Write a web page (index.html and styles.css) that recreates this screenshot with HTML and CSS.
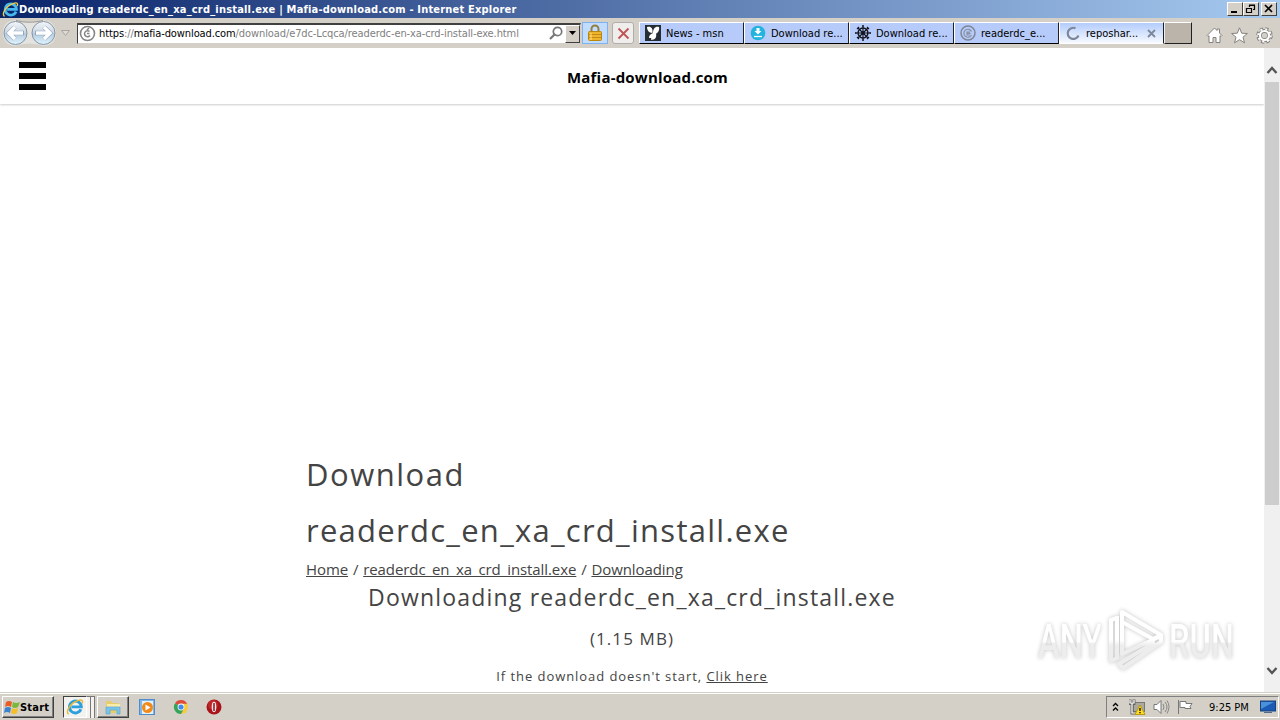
FILE: index.html
```html
<!DOCTYPE html>
<html>

	<head>
		<meta charset="UTF-8">
		<title>Downloading readerdc_en_xa_crd_install.exe | Mafia-download.com</title>
		<link rel="stylesheet" href="styles.css">
	</head>

	<body>
		<div class="titlebar">
			<svg class="ie" width="17" height="17" viewBox="0 0 20 20"><path d="M16.500 12.500A6.600 6.600 0 1 1 17 9.800H6" fill="none" stroke="#45b9ee" stroke-width="3.200"/><path d="M3 18C-1 16 4 6 13 3c5-2 6 0 5 3" fill="none" stroke="#f3cf45" stroke-width="1.600"/></svg>
			<span class="title">Downloading readerdc_en_xa_crd_install.exe | Mafia-download.com - Internet Explorer</span>
			<div class="winbtns">
				<span class="wbtn"><svg width="14" height="12"><path d="M3 9h6" stroke="#000" stroke-width="2"/></svg></span>
				<span class="wbtn"><svg width="14" height="12"><path d="M5.500 4V2.500h5v4H9M5 2h6M2.500 5.500h5v4h-5zM2 5.500h6" fill="none" stroke="#000" stroke-width="1.200"/></svg></span>
				<span class="wbtn last"><svg width="14" height="12"><path d="M3 2l7 7M10 2l-7 7" stroke="#000" stroke-width="1.700"/></svg></span>
			</div>
		</div>
		<div class="toolbar">
			<svg class="nav" width="74" height="28" viewBox="0 0 74 28">
				<defs>
					<linearGradient id="ball" x1="0" y1="0" x2="0" y2="1"><stop offset="0" stop-color="#f4f6fa"/><stop offset=".48" stop-color="#ccd7e4"/><stop offset=".52" stop-color="#b5c9dd"/><stop offset="1" stop-color="#dff6ff"/></linearGradient>
				</defs>
				<path d="M15 1Q29 5 43 1Q56 2 56 15Q55 27 43 27Q29 22 15 27Q3 26 3 14Q3 2 15 1z" fill="#e5e3df"/>
				<path d="M16 1.500Q29 5 43 1.500" fill="none" stroke="#9b9895"/>
				<circle cx="15.500" cy="14" r="11.500" fill="url(#ball)" stroke="#8796a5"/>
				<circle cx="43.500" cy="14" r="11.500" fill="url(#ball)" stroke="#8796a5"/>
				<path d="M24 14H9M15 8l-6 6 6 6" fill="none" stroke="#8fa6bd" stroke-width="4.500"/>
				<path d="M35 14h15M44 8l6 6-6 6" fill="none" stroke="#8fa6bd" stroke-width="4.500"/>
				<path d="M23 14H9M15 8l-6 6 6 6" fill="none" stroke="#fff" stroke-width="3.400"/>
				<path d="M36 14h14M44 8l6 6-6 6" fill="none" stroke="#fff" stroke-width="3.400"/>
				<path d="M61.500 11.500h8l-4 5z" fill="#dedbd6" stroke="#aaa59e"/>
			</svg>
			<div class="address">
				<svg class="swirl" width="17" height="17" viewBox="0 0 17 17"><circle cx="8.500" cy="8.500" r="7" fill="none" stroke="#858585" stroke-width="1.600"/><path d="M11 10.500A3 3 0 1 1 10.500 6.500M8 8.500h2.500M8 5l2-2" fill="none" stroke="#858585" stroke-width="1.500"/></svg>
				<span class="url">https<i>://</i>mafia-download.com<i class="path">/download/e7dc-Lcqca/readerdc-en-xa-crd-install-exe.html</i></span>
				<svg class="search" width="14" height="15" viewBox="0 0 14 15"><circle cx="8.500" cy="5.500" r="4.200" fill="none" stroke="#777" stroke-width="1.700"/><path d="M5.500 8.500L1 13" stroke="#777" stroke-width="2.200"/></svg>
				<span class="drop"><svg width="8" height="5"><path d="M0 0h7L3.500 4z"/></svg></span>
			</div>
			<div class="lock">
				<svg width="16" height="18" viewBox="0 0 16 18"><path d="M4.500 8V5a3.500 3.500 0 0 1 7 0v3" fill="none" stroke="#94803e" stroke-width="2"/><rect x="1.500" y="7.500" width="13" height="9" rx="1" fill="#edb42c" stroke="#b98614"/><path d="M2 10.500h12M2 13.500h12" stroke="#c38b15"/><path d="M4 9v7" stroke="#ffe28a"/></svg>
			</div>
			<div class="stop">
				<svg width="13" height="13" viewBox="0 0 13 13"><path d="M1.500 1.500l10 10M11.500 1.500l-10 10" stroke="#bf5557" stroke-width="1.900"/></svg>
			</div>
			<div class="tabs">
				<div class="tab">
					<svg width="16" height="16" viewBox="0 0 16 16"><rect width="16" height="16" fill="#252c34"/><path d="M2 2c4-1 6 1 5.500 6C4 8 2 5 2 2zM8 8c0-4 2-7 6-6 1 4-2 6-3 7 1 3-1 6-5 6 1-2 0-2-2-2 0-3 2-4 4-5z" fill="#fff"/></svg>
					<span class="label">News - msn</span>
				</div>
				<div class="tab">
					<svg width="16" height="16" viewBox="0 0 16 16"><circle cx="8" cy="8" r="7.300" fill="#22b4de"/><path d="M6.500 3h3v3h2L8 9.500 4.500 6h2z" fill="#fff"/><path d="M4 11.500h8" stroke="#fff" stroke-width="1.300"/></svg>
					<span class="label">Download re...</span>
				</div>
				<div class="tab">
					<svg width="16" height="16" viewBox="0 0 16 16"><circle cx="8" cy="8" r="4.900" fill="none" stroke="#10151f" stroke-width="1.500"/><path d="M8 1v14M1 8h14M3 3l10 10M13 3L3 13" stroke="#10151f" stroke-width="1.100"/><circle cx="8" cy="8" r="1.800" fill="#10151f"/><path d="M7 .8h2M7 15.200h2M.8 7v2M15.200 7v2M2 4l2-2M12 2l2 2M2 12l2 2M12 14l2-2" stroke="#10151f" stroke-width="1.200"/></svg>
					<span class="label">Download re...</span>
				</div>
				<div class="tab">
					<svg width="16" height="16" viewBox="0 0 16 16"><circle cx="8" cy="8" r="7" fill="none" stroke="#7e8798" stroke-width="1.500"/><path d="M11.500 10A4 4 0 1 1 11.500 6.500M6.500 8.300h4M10 7H7v3h3" fill="none" stroke="#8690a1" stroke-width="1.200"/></svg>
					<span class="label">readerdc_e...</span>
				</div>
				<div class="tab active">
					<svg width="16" height="16" viewBox="0 0 16 16"><path d="M13.500 10.500A5.600 5.600 0 1 1 10.500 3.200" fill="none" stroke="#7d879a" stroke-width="2.200"/></svg>
					<span class="label">reposhar...</span>
					<svg class="close" width="9" height="9"><path d="M1 1l7 7M8 1L1 8" stroke="#7c879a" stroke-width="1.800"/></svg>
				</div>
				<div class="newtab"></div>
			</div>
			<div class="tools">
				<svg width="17" height="17" viewBox="0 0 17 17"><path d="M1 8.500L8.500 1 11 3.500V2h2.500v4L16 8.500l-1 1-1-.8V15.500h-4v-5H7v5H3V8.700l-1 .8z" fill="#fff" stroke="#85827d"/></svg>
				<svg width="17" height="17" viewBox="0 0 17 17"><path d="M8.500 .8l2.200 5.400 5.700.3-4.400 3.700 1.500 5.600-5-3.100-5 3.100L5 10.200.6 6.500l5.700-.3z" fill="#fff" stroke="#85827d"/></svg>
				<svg width="17" height="17" viewBox="0 0 17 17"><circle cx="8.500" cy="8.500" r="6.500" fill="none" stroke="#85827d" stroke-width="3.500" stroke-dasharray="3 2.100"/><circle cx="8.500" cy="8.500" r="4.500" fill="none" stroke="#85827d" stroke-width="4"/><circle cx="8.500" cy="8.500" r="6.300" fill="none" stroke="#fff" stroke-width="2" stroke-dasharray="2 2.950"/><circle cx="8.500" cy="8.500" r="4.500" fill="none" stroke="#fff" stroke-width="2.200"/><circle cx="8.500" cy="8.500" r="2.500" fill="#d4d0c8"/></svg>
			</div>
		</div>

		<div class="view">
			<div class="page">
				<header class="head">
					<div class="burger"><b></b><b></b><b></b></div>
					<div class="brand">Mafia-download.com</div>
				</header>
				<main class="content">
					<h1>Download<br><span>readerdc_en_xa_crd_install.exe</span></h1>
					<div class="crumbs"><a>Home</a> / <a>readerdc_en_xa_crd_install.exe</a> / <a>Downloading</a></div>
					<h2>Downloading readerdc_en_xa_crd_install.exe</h2>
					<div class="size">(1.15 MB)</div>
					<p class="hint">If the download doesn't start, <a>Clik here</a></p>
				</main>
			</div>
			<div class="scrollbar">
				<svg class="up" width="12" height="9" viewBox="0 0 12 9"><path d="M1.500 7L6 2l4.500 5" fill="none" stroke="#555" stroke-width="2.400"/></svg>
				<div class="thumb"></div>
				<svg class="down" width="12" height="9" viewBox="0 0 12 9"><path d="M1.500 2L6 7l4.500-5" fill="none" stroke="#555" stroke-width="2.400"/></svg>
			</div>
			<!-- watermark over the page -->
			<div class="mark">
				<span class="any">ANY</span>
				<svg width="60" height="66" viewBox="0 0 60 66">
					<defs>
						<linearGradient id="fade" x1="0" y1="0" x2="0" y2="1"><stop offset=".5" stop-color="#fff"/><stop offset=".6" stop-color="#ededed"/></linearGradient>
					</defs>
					<path d="M12 10L6 12V53L12 50V8M17 32V4L56 27L48 31L17 14V46L56 28V34L18 60L14 56L50 34" fill="none" stroke="url(#fade)" stroke-width="4" stroke-linejoin="round"/>
				</svg>
				<span class="run">RUN</span>
			</div>
		</div>

		<div class="taskbar">
			<div class="start">
				<svg width="18" height="17" viewBox="0 0 18 17"><path d="M3 3q3-2 6 0L8 8q-3-2-6 0z" fill="#e95d25"/><path d="M10 3q3 2 7 0l-2 5q-3 2-6 0z" fill="#78b93c"/><path d="M2 9q3-2 6 0l-1 5q-3-2-6 0z" fill="#3b83d0"/><path d="M9 9q3 2 6 0l-1 5q-3 2-6 0z" fill="#f6bd25"/></svg>
				<span>Start</span>
			</div>
			<div class="task pressed">
				<svg width="18" height="18" viewBox="0 0 20 20"><path d="M16.500 12.500A6.600 6.600 0 1 1 17 9.800H6" fill="none" stroke="#2ba0df" stroke-width="3.200"/><path d="M3 18C-1 16 4 6 13 3c5-2 6 0 5 3" fill="none" stroke="#e9b936" stroke-width="1.600"/></svg>
			</div>
			<div class="stack"></div>
			<div class="stack"></div>
			<div class="task folder">
				<svg width="18" height="17" viewBox="0 0 18 17"><path d="M2 2h5l1 2h7v10H2z" fill="#e8cc6a"/><path d="M3 5h13v5H3z" fill="#f9ebaa"/><path d="M2 8h14v7h-3v-4H6v4H2z" fill="#79c4e6" stroke="#5ba8d0" stroke-width=".7"/></svg>
			</div>
			<div class="quick">
				<svg width="17" height="17" viewBox="0 0 17 17"><rect x=".5" y=".5" width="15" height="15" fill="#7eb7e8" stroke="#4f8cc9"/><rect x="3" y="2" width="11" height="13" fill="#e5f1fa"/><circle cx="8.500" cy="8.500" r="5.500" fill="#f18a1b"/><path d="M6.500 5.500v6l5-3z" fill="#fff"/></svg>
				<svg width="16" height="16" viewBox="0 0 16 16"><path d="M8 8L2 4.300A7 7 0 0 1 14.200 4.800z" fill="#de4a3c"/><path d="M8 8V4.800h6.200A7 7 0 0 1 8 15z" fill="#f7cb3c"/><path d="M8 8l-6-3.700A7 7 0 0 0 8 15l3-5.500z" fill="#35a456"/><circle cx="8" cy="8" r="3.400" fill="#fff"/><circle cx="8" cy="8" r="2.600" fill="#4589ed"/></svg>
				<svg width="16" height="16" viewBox="0 0 16 16"><circle cx="8" cy="8" r="7.500" fill="#a9141a"/><circle cx="7" cy="6" r="5" fill="#c93434" opacity=".6"/><ellipse cx="8" cy="8" rx="2.300" ry="5.200" fill="#eee"/><path d="M8 4v8" stroke="#a9141a" stroke-width="1.600"/></svg>
			</div>
			<div class="tray">
				<svg class="chev" width="7" height="10"><path d="M1 4l2.500-2.500L6 4M1 8.500L3.500 6 6 8.500" fill="none" stroke="#000" stroke-width="1.300"/></svg>
				<svg class="net" width="17" height="16" viewBox="0 0 17 16"><rect x="4.500" y="3.500" width="11" height="9" fill="#aaa99c" stroke="#777"/><path d="M1 .5v4h4v-4M3 4v10h4" fill="none" stroke="#666" stroke-width="3"/><path d="M1 1v3h4V1M3 4v10h4" fill="none" stroke="#fff" stroke-width="1.200"/><path d="M11 6l5 9.500H6z" fill="#ffde22" stroke="#b79a16"/><path d="M11 9v3M11 13v1.200" stroke="#000" stroke-width="1.300"/></svg>
				<svg class="snd" width="17" height="16" viewBox="0 0 17 16"><path d="M1 5.500h3l4-4v13l-4-4H1z" fill="#fff" stroke="#777"/><path d="M10 5q2 3 0 6M12 3q4 5 0 10M14 1.500q4 6 0 13" fill="none" stroke="#888"/></svg>
				<svg class="flag" width="17" height="16" viewBox="0 0 17 16"><path d="M1.500 1v14M3 2.500h6v2h6l-2 3 1 2H8v-1H3z" fill="#fff" stroke="#777"/></svg>
				<span class="clock">9:25 PM</span>
				<svg class="desk" width="16" height="14" viewBox="0 0 16 14"><rect x=".5" y="1" width="15" height="10" fill="#1b5bb5" stroke="#17427d"/><path d="M1 2h13L1 9z" fill="#4a90da"/><path d="M4 12.500h8" stroke="#516a87"/></svg>
			</div>
		</div>
	</body>

</html>
```
FILE: styles.css
```css
* {
	box-sizing: border-box;
}
body {
	margin: 0;
	width: 1280px;
	height: 720px;
	overflow: hidden;
	display: flex;
	flex-direction: column;
	font-family: "DejaVu Sans Condensed", "DejaVu Sans", sans-serif;
	font-size: 11px;
	background: #fff;
}
svg {
	display: block;
	flex: none;
}
.titlebar {
	height: 18px;
	display: flex;
	align-items: center;
	padding: 0 3px 0 2px;
	background: linear-gradient(90deg, #0a246a, #a6caf0);
	color: #fff;
	font-weight: bold;
	white-space: nowrap;
}
.title {
	line-height: 18px;
	padding-top: 1px;
	letter-spacing: 0.19px;
}
.winbtns {
	margin-left: auto;
	display: flex;
}
.wbtn {
	width: 16px;
	height: 14px;
	background: #d4d0c8;
	border: 1px solid;
	border-color: #fff #404040 #404040 #fff;
}
.last {
	margin-left: 2px;
}

.toolbar {
	height: 30px;
	display: flex;
	align-items: center;
	background: #d4d0c8;
	white-space: nowrap;
}
.nav {
	margin-right: 3px;
}
.address {
	width: 504px;
	height: 21px;
	display: flex;
	align-items: center;
	background: #fff;
	border: 1px solid #d4d0c8;
	border-top: 2px solid #404040;
	border-left: 1px solid #404040;
}
.swirl {
	margin: 0 3px 0 1px;
}
.url {
	width: 450px;
	color: #000;
	letter-spacing: -0.1px;
}
.url i {
	font-style: normal;
	color: #808080;
}
.search {
	margin: 0 2px 0 0;
}
.drop {
	width: 15px;
	height: 18px;
	display: flex;
	align-items: center;
	justify-content: center;
	background: #d4d0c8;
	border: 1px solid;
	border-color: #fff #404040 #404040 #fff;
}
.lock {
	width: 26px;
	height: 22px;
	margin-left: 1px;
	display: flex;
	align-items: center;
	justify-content: center;
	background: #c2dcff;
	border: 1px solid #7eb1ee;
}
.stop {
	width: 22px;
	height: 22px;
	margin: 0 5px 0 4px;
	display: flex;
	align-items: center;
	justify-content: center;
	background: #f0eeec;
	border: 1px solid #b1adaa;
	border-radius: 3px;
}
.tabs {
	height: 22px;
	display: flex;
}
.tab {
	width: 105px;
	display: flex;
	align-items: center;
	padding-left: 5px;
	background: #b6cbfa;
	border-top: 1px solid #fff;
	border-left: 1px solid #fff;
	border-right: 1px solid #202020;
	border-bottom: 1px solid #000;
}
.tab .label {
	margin-left: 5px;
	padding-top: 1px;
}
.active {
	background: linear-gradient(#b3ccfc, #f7faff);
	border-bottom-color: #fff;
}
.close {
	margin-left: 9px;
}
.newtab {
	width: 28px;
	background: #bbb4aa;
	border: 1px solid;
	border-color: #fff #202020 #202020 #eee;
}
.tools {
	margin-left: 14px;
	padding-top: 4px;
	display: flex;
	gap: 8px;
}

.view {
	position: relative;
	height: 644px;
	display: flex;
	font-family: "Open Sans", "Noto Sans", sans-serif;
	color: #444;
}
.page {
	width: 1264px;
	overflow: hidden;
}
.head {
	height: 56px;
	display: flex;
	align-items: center;
	box-shadow: 0 1px 2px #ccc;
}
.burger {
	width: 28px;
	margin: 0 0 0 18px;
	padding-left: 1px;
	display: flex;
	flex-direction: column;
	gap: 5px;
}
.burger b {
	width: 27px;
	height: 6px;
	background: #000;
}
.brand {
	margin: 2px 0 0 521px;
	font-size: 15px;
	font-weight: bold;
	color: #000;
	letter-spacing: 0.2px;
}
.content {
	width: 652px;
	margin: 342px 0 0 306px;
}
h1 {
	margin: 0;
	font-size: 31px;
	font-weight: normal;
	line-height: 56px;
	letter-spacing: 1.5px;
}
h1 span {
	letter-spacing: 1.27px;
}
.crumbs {
	height: 23px;
	font-size: 15px;
	line-height: 22px;
	letter-spacing: -0.08px;
	word-spacing: 1px;
}
.content a {
	text-decoration: underline;
}
h2 {
	margin: 0;
	font-size: 23px;
	font-weight: normal;
	line-height: 32px;
	letter-spacing: 1.19px;
	text-align: center;
}
.size {
	margin-top: 9px;
	font-size: 17px;
	line-height: 34px;
	letter-spacing: 1.1px;
	text-align: center;
}
.hint {
	margin: 6px 0 0;
	font-size: 13px;
	line-height: 28px;
	letter-spacing: 0.94px;
	text-align: center;
}
.scrollbar {
	width: 16px;
	background: #f0f0f0;
	display: flex;
	flex-direction: column;
	align-items: center;
}
.up {
	margin: 18px 0 7px;
}
.thumb {
	width: 14px;
	height: 423px;
	background: #cdcdcd;
}
.down {
	margin-top: auto;
	margin-bottom: 17px;
}
.mark {
	position: absolute;
	left: 1038px;
	top: 560px;
	display: flex;
	align-items: center;
	font-family: Roboto, sans-serif;
	font-size: 48px;
	font-weight: 500;
	filter: drop-shadow(0 0 2px #c4c4c4);
}
.mark span {
	width: 92px;
	margin-right: -25px;
	transform: scaleX(0.68);
	transform-origin: left;
	background: linear-gradient(#fff 50%, #ededed 54%);
	-webkit-background-clip: text;
	background-clip: text;
	color: transparent;
}
.mark .run {
	margin-left: 4px;
}

.taskbar {
	height: 28px;
	display: flex;
	align-items: center;
	padding: 1px 1px 0 2px;
	background: #d4d0c8;
	border-top: 1px solid #d4d0c8;
	box-shadow: inset 0 1px #fff;
}
.start {
	width: 52px;
	height: 22px;
	display: flex;
	align-items: center;
	font-weight: bold;
	border: 1px solid;
	border-color: #fff #404040 #404040 #fff;
	box-shadow: inset -1px -1px #808080;
}
.start span {
	margin-left: -1px;
	letter-spacing: 0.2px;
}
.task {
	display: flex;
	align-items: center;
	justify-content: center;
	height: 22px;
	border: 1px solid;
	border-color: #fff #404040 #404040 #fff;
	box-shadow: inset -1px -1px #808080;
}
.pressed {
	width: 24px;
	margin-left: 9px;
	background: #f4f2ef;
	border-color: #404040 #fff #fff #404040;
	box-shadow: none;
}
.stack {
	width: 4px;
	height: 22px;
	border: 1px solid #777;
	border-width: 1px 1px 0 0;
	background: #f4f2ef;
}
.folder {
	width: 32px;
	margin-left: 2px;
}
.quick {
	display: flex;
	align-items: center;
	gap: 17px;
	margin-left: 10px;
}
.tray {
	width: 173px;
	height: 22px;
	margin-left: auto;
	display: flex;
	align-items: center;
	padding-left: 5px;
	border: 1px solid;
	border-color: #808080 #fff #fff #808080;
}
.net {
	margin-left: 10px;
}
.snd {
	margin-left: 7px;
}
.flag {
	margin-left: 7px;
}
.clock {
	width: 51px;
	margin-left: 15px;
	white-space: nowrap;
}
```
